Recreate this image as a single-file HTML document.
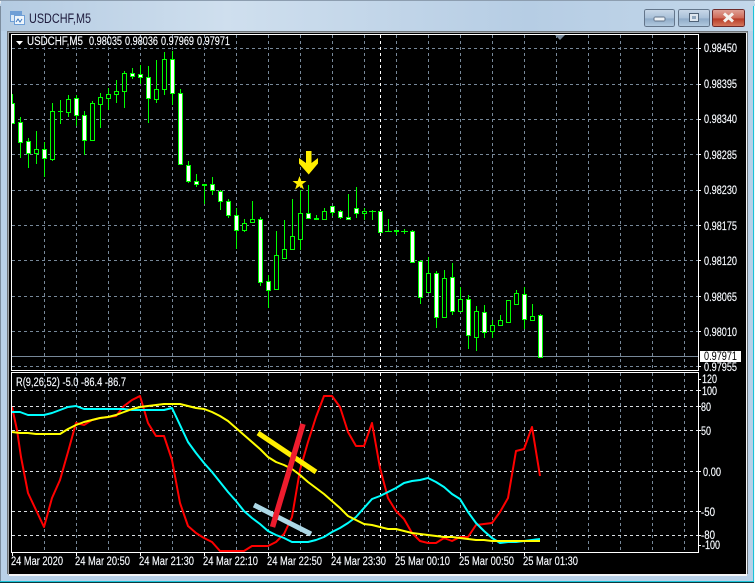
<!DOCTYPE html>
<html><head><meta charset="utf-8"><title>USDCHF,M5</title>
<style>
html,body{margin:0;padding:0;background:#000;width:755px;height:583px;overflow:hidden}
svg{display:block}
text{font-family:"Liberation Sans",sans-serif;font-size:11.5px;fill:#fff;stroke:#e8f2ff;stroke-width:.15px}
</style></head><body>
<svg width="755" height="583" viewBox="0 0 755 583" xmlns="http://www.w3.org/2000/svg" shape-rendering="crispEdges">
<defs>
<linearGradient id="tb" x1="0" y1="0" x2="1" y2="0"><stop offset="0" stop-color="#b4cbe2"/><stop offset=".3" stop-color="#cfdfee"/><stop offset=".7" stop-color="#b6cde4"/><stop offset="1" stop-color="#c3d7ea"/></linearGradient>
<linearGradient id="bt" x1="0" y1="0" x2="0" y2="1"><stop offset="0" stop-color="#c9d9e9"/><stop offset=".5" stop-color="#a9c0d8"/><stop offset=".55" stop-color="#8fabc8"/><stop offset="1" stop-color="#b3cbe0"/></linearGradient>
<linearGradient id="cl" x1="0" y1="0" x2="0" y2="1"><stop offset="0" stop-color="#e0a398"/><stop offset=".5" stop-color="#cf6a58"/><stop offset=".55" stop-color="#b83c28"/><stop offset="1" stop-color="#d67a60"/></linearGradient>
<clipPath id="m"><rect x="12" y="35" width="686" height="335"/></clipPath>
<clipPath id="s"><rect x="12" y="373" width="686" height="179"/></clipPath>
</defs>
<!-- window chrome -->
<rect width="755" height="583" fill="#eef1f4"/>
<path d="M0 583V6Q0 0 6 0H749Q755 0 755 6V583Z" fill="#b9d1e8"/>
<rect x="1" y="1" width="753" height="30" fill="url(#tb)"/>
<rect x="0" y="0" width="755" height="1" fill="#8d9eb0"/>
<rect x="7" y="31" width="741" height="543" fill="#6d7378"/>
<rect x="8" y="32" width="739" height="543" fill="#a3a7aa"/>
<rect x="9" y="33" width="738" height="543" fill="#f4f5f6"/>
<rect x="9" y="33" width="737" height="541" fill="#000"/>
<rect x="0" y="581" width="755" height="1" fill="#19c3d8"/>
<rect x="0" y="582" width="755" height="1" fill="#0b3a40"/>
<rect x="753" y="6" width="1" height="575" fill="#19c3d8"/>
<rect x="754" y="6" width="1" height="577" fill="#f2f5f7"/>
<rect x="0" y="6" width="1" height="575" fill="#7c8d9e"/>
<!-- title icon -->
<g>
<rect x="10.5" y="11.5" width="11" height="10" fill="#dce9f6" stroke="#6f9fd6"/>
<rect x="11" y="12" width="10" height="3" fill="#6f9fd6"/>
<rect x="14.5" y="15.5" width="10" height="9" fill="#eef5fb" stroke="#6f9fd6"/>
<path d="M16 22l2-3 2 3 2-3" fill="none" stroke="#3c78c0" shape-rendering="auto"/>
</g>
<text x="29" y="23" textLength="62" lengthAdjust="spacingAndGlyphs" style="font-size:13.5px;fill:#1d1a3c;stroke:none" shape-rendering="auto">USDCHF,M5</text>
<!-- buttons -->
<rect x="644.5" y="9.5" width="30" height="17" rx="2" fill="url(#bt)" stroke="#63758a"/>
<rect x="654" y="17" width="11" height="4" rx="1" fill="#eef2f6" stroke="#5f7188" stroke-width=".6"/>
<rect x="678.5" y="9.5" width="31" height="17" rx="2" fill="url(#bt)" stroke="#63758a"/>
<rect x="689.5" y="13.5" width="9" height="8" fill="#dfe7ef" stroke="#4f6277"/>
<rect x="692" y="16" width="4" height="3" fill="#8fa6bd"/>
<rect x="712.5" y="9.5" width="32" height="17" rx="2" fill="url(#cl)" stroke="#6e2a2a"/>
<path d="M724 13.5l9 8M733 13.5l-9 8" stroke="#f4f2ee" stroke-width="3" fill="none" shape-rendering="auto"/>
<!-- grids -->
<g stroke="#778899" stroke-width="1" stroke-dasharray="3 3" fill="none">
<path d="M12 48.5H698M12 84.5H698M12 119.5H698M12 154.5H698M12 190.5H698M12 225.5H698M12 260.5H698M12 296.5H698M12 331.5H698M12 366.5H698"/>
<path d="M44.5 35V370M76.5 35V370M108.5 35V370M140.5 35V370M172.5 35V370M204.5 35V370M236.5 35V370M268.5 35V370M300.5 35V370M332.5 35V370M364.5 35V370M396.5 35V370M428.5 35V370M460.5 35V370M492.5 35V370M524.5 35V370M556.5 35V370M588.5 35V370M620.5 35V370M652.5 35V370M684.5 35V370"/>
<path d="M44.5 373V552M76.5 373V552M108.5 373V552M140.5 373V552M172.5 373V552M204.5 373V552M236.5 373V552M268.5 373V552M300.5 373V552M332.5 373V552M364.5 373V552M396.5 373V552M428.5 373V552M460.5 373V552M492.5 373V552M524.5 373V552M556.5 373V552M588.5 373V552M620.5 373V552M652.5 373V552M684.5 373V552"/>
</g>
<path d="M12 390.5H698M12 406.5H698M12 430.5H698M12 471.5H698M12 511.5H698M12 535.5H698" stroke="#d8dde2" stroke-dasharray="3 3" fill="none"/>
<path d="M380.5 35V370M380.5 373V552" stroke="#fff" stroke-dasharray="3 3" fill="none"/>
<!-- price line -->
<rect x="12" y="356" width="686" height="1" fill="#778899"/>
<!-- candles -->
<g clip-path="url(#m)" stroke="#00ff00" stroke-width="1">
<path fill="none" d="M12.5 94V124M20.5 117V158M28.5 138V168M36.5 131V164M44.5 142V177M52.5 103V161M60.5 100V124M68.5 95V117M76.5 95V126M84.5 111V155M92.5 101V141M100.5 93V128M108.5 88V110M116.5 80V103M124.5 71V108M132.5 68V79M140.5 65V84M148.5 66V123M156.5 60V103M164.5 52V95M172.5 51V105M180.5 89V165M188.5 161V183M196.5 174V187M204.5 184V204M212.5 177V195M220.5 190V210M228.5 199V218M236.5 208V249M244.5 219V232M252.5 201V223M260.5 217V286M268.5 275V308M276.5 231V290M284.5 220V259M292.5 199V250M300.5 190V250M308.5 185V219M316.5 215V220M324.5 208V220M332.5 206V216M340.5 210V219M348.5 194V220M356.5 187V218M364.5 208V220M372.5 210V220M380.5 211V232M388.5 219V232M396.5 230V235M404.5 229V234M412.5 230V263M420.5 260V304M428.5 257V292M436.5 271V328M444.5 270V318M452.5 263V315M460.5 287V312M468.5 295V349M476.5 306V351M484.5 305V338M492.5 320V338M500.5 315V326M508.5 300V323M516.5 290V304M524.5 287V329M532.5 304V320M540.5 314V358"/>
<path fill="none" d="M58 111.5h5M369 211.5h7M385 231.5h7M401 231.5h7"/>
<path fill="#000" d="M34.5 149.5h4v4h-4zM50.5 111.5h4v48h-4zM66.5 99.5h4v13h-4zM90.5 103.5h4v37h-4zM98.5 97.5h4v7h-4zM106.5 94.5h4v4h-4zM114.5 91.5h4v3h-4zM122.5 73.5h4v18h-4zM154.5 89.5h4v10h-4zM162.5 59.5h4v30h-4zM242.5 223.5h4v7h-4zM250.5 219.5h4v3h-4zM274.5 255.5h4v34h-4zM282.5 249.5h4v9h-4zM290.5 236.5h4v13h-4zM298.5 213.5h4v26h-4zM322.5 211.5h4v8h-4zM362.5 211.5h4v2h-4zM426.5 273.5h4v19h-4zM442.5 278.5h4v39h-4zM458.5 299.5h4v12h-4zM474.5 311.5h4v26h-4zM490.5 325.5h4v6h-4zM498.5 320.5h4v5h-4zM506.5 300.5h4v22h-4zM514.5 293.5h4v11h-4zM530.5 316.5h4v4h-4z"/>
<path fill="#fff" d="M10.5 103.5h4v20h-4zM18.5 122.5h4v20h-4zM26.5 141.5h4v12h-4zM42.5 149.5h4v9h-4zM74.5 98.5h4v17h-4zM82.5 115.5h4v25h-4zM130.5 73.5h4v3h-4zM138.5 74.5h4v3h-4zM146.5 77.5h4v21h-4zM170.5 59.5h4v34h-4zM178.5 93.5h4v71h-4zM186.5 165.5h4v16h-4zM194.5 181.5h4v3h-4zM202.5 184.5h4v1h-4zM210.5 184.5h4v6h-4zM218.5 191.5h4v10h-4zM226.5 201.5h4v14h-4zM234.5 215.5h4v15h-4zM258.5 219.5h4v63h-4zM266.5 281.5h4v9h-4zM306.5 213.5h4v5h-4zM314.5 218.5h4v1h-4zM330.5 206.5h4v6h-4zM338.5 211.5h4v6h-4zM346.5 217.5h4v2h-4zM354.5 208.5h4v5h-4zM378.5 211.5h4v21h-4zM394.5 230.5h4v1h-4zM410.5 231.5h4v31h-4zM418.5 261.5h4v36h-4zM434.5 273.5h4v44h-4zM450.5 277.5h4v34h-4zM466.5 299.5h4v36h-4zM482.5 312.5h4v20h-4zM522.5 294.5h4v25h-4zM538.5 315.5h4v42h-4z"/>
</g>
<!-- arrow + star -->
<path d="M306 151H311.500V163L318 158V163.500L308.700 174.500L299 163.500V158L306 163Z" fill="#ffee00" shape-rendering="auto"/>
<path d="M299.500 176L301.300 181H306.500L302.300 184.200L303.900 189.500L299.500 186.300L295.100 189.500L296.700 184.200L292.500 181H297.700Z" fill="#ffee00" shape-rendering="auto"/>
<!-- frames -->
<path d="M11.500 34.500H698.500V370.500H11.500ZM11.500 372.500H698.500V552.500H11.500Z" fill="none" stroke="#fff"/>
<path d="M555 35H565L560 40Z" fill="#778899" shape-rendering="auto"/>
<path d="M16 41H23L19.500 45Z" fill="#fff" shape-rendering="auto"/>
<!-- indicator -->
<g clip-path="url(#s)" fill="none" stroke-width="2" shape-rendering="auto" stroke-linejoin="round">
<polyline stroke="#ff0000" points="12,407 17,430 21,457 28,493 36,510 44,527 52,498 60,480 68,452 76,423 84,425 92,420 100,418 108,417 116,416 124,406 132,400 140,396 148,423 156,436 164,436 172,460 180,503 188,526 196,533 204,538 212,542 220,551 228,551 236,551 244,551 252,546 260,546 268,546 276,542 284,534 292,517 300,470 308,442 316,417 324,396 332,396 340,407 348,432 356,446 364,446 372,423 380,468 388,498 396,511 404,519 412,533 420,541 428,543 436,543 444,538 452,541 460,537 468,537 476,525 484,524 492,523 500,512 508,498 516,451 524,449 532,427 540,476"/>
<polyline stroke="#00ffff" points="12,412 20,412 28,415 36,415 44,415 52,413 60,410 68,407 76,406 84,409 92,409 100,409 108,409 116,409 124,409 132,410 140,410 148,410 156,410 164,410 172,408 180,425 188,442 196,453 204,463 212,472 220,482 228,492 236,501 244,511 252,518 260,524 268,531 276,535 284,538 292,542 300,542 308,542 316,540 324,537 332,532 340,528 348,523 356,517 364,508 372,499 380,496 388,492 396,488 404,483 412,481 420,480 428,478 436,482 444,487 452,494 460,499 468,512 476,523 484,531 492,538 500,543 508,542 516,542 524,541 532,540 540,539"/>
<polyline stroke="#ffff00" points="12,432 20,433 28,433 36,434 44,434 52,434 60,434 68,429 76,425 84,422 92,420 100,418 108,417 116,415 124,412 132,409 140,407 148,406 156,405 164,404 172,404 180,404 188,406 196,408 204,409 212,412 220,416 228,421 236,428 244,435 252,442 260,449 268,457 276,462 284,465 292,469 300,475 308,482 316,488 324,494 332,501 340,508 348,516 356,520 364,524 372,525 380,527 388,529 396,529 404,531 412,533 420,534 428,535 436,536 444,537 452,537 460,538 468,539 476,540 484,540 492,541 500,541 508,541 516,541 524,541 532,541 540,541"/>
<path d="M258 433L316 472" stroke="#ffee00" stroke-width="5"/>
<path d="M254 505L311 534" stroke="#add8e6" stroke-width="5"/>
<path d="M272.500 527L303 424" stroke="#ee1c2e" stroke-width="5.500"/>
</g>
<!-- header texts -->
<g shape-rendering="auto">
<text x="27" y="45" textLength="56" lengthAdjust="spacingAndGlyphs">USDCHF,M5</text>
<text x="89" y="45" textLength="33" lengthAdjust="spacingAndGlyphs">0.98035</text>
<text x="125" y="45" textLength="33" lengthAdjust="spacingAndGlyphs">0.98036</text>
<text x="161" y="45" textLength="33" lengthAdjust="spacingAndGlyphs">0.97969</text>
<text x="197" y="45" textLength="33" lengthAdjust="spacingAndGlyphs">0.97971</text>
<text x="16" y="386" textLength="110" lengthAdjust="spacingAndGlyphs">R(9,26,52) -5.0 -86.4 -86.7</text>
<!-- price axis -->
<g>
<text x="704" y="52" textLength="33" lengthAdjust="spacingAndGlyphs">0.98450</text>
<text x="704" y="88" textLength="33" lengthAdjust="spacingAndGlyphs">0.98395</text>
<text x="704" y="123" textLength="33" lengthAdjust="spacingAndGlyphs">0.98340</text>
<text x="704" y="159" textLength="33" lengthAdjust="spacingAndGlyphs">0.98285</text>
<text x="704" y="194" textLength="33" lengthAdjust="spacingAndGlyphs">0.98230</text>
<text x="704" y="230" textLength="33" lengthAdjust="spacingAndGlyphs">0.98175</text>
<text x="704" y="265" textLength="33" lengthAdjust="spacingAndGlyphs">0.98120</text>
<text x="704" y="301" textLength="33" lengthAdjust="spacingAndGlyphs">0.98065</text>
<text x="704" y="336" textLength="33" lengthAdjust="spacingAndGlyphs">0.98010</text>
<text x="704" y="371" textLength="33" lengthAdjust="spacingAndGlyphs">0.97955</text>
</g>
</g>
<rect x="700" y="351" width="41" height="11" fill="#fff"/>
<text x="704" y="360" textLength="33" lengthAdjust="spacingAndGlyphs" style="fill:#000;stroke:none" shape-rendering="auto">0.97971</text>
<path d="M698 48.500h3M698 84.500h3M698 119.500h3M698 154.500h3M698 190.500h3M698 225.500h3M698 260.500h3M698 296.500h3M698 331.500h3M698 366.500h3M698 390.500h3M698 406.500h3M698 430.500h3M698 471.500h3M698 511.500h3M698 535.500h3M698 379.500h3M698 545.500h3" stroke="#fff"/>
<g shape-rendering="auto">
<text x="702" y="383" textLength="15" lengthAdjust="spacingAndGlyphs">120</text>
<text x="702" y="395" textLength="15" lengthAdjust="spacingAndGlyphs">100</text>
<text x="701" y="411" textLength="10" lengthAdjust="spacingAndGlyphs">80</text>
<text x="701" y="435" textLength="10" lengthAdjust="spacingAndGlyphs">50</text>
<text x="703" y="476" textLength="18" lengthAdjust="spacingAndGlyphs">0.00</text>
<text x="701" y="516" textLength="14" lengthAdjust="spacingAndGlyphs">-50</text>
<text x="701" y="539" textLength="14" lengthAdjust="spacingAndGlyphs">-80</text>
<text x="702" y="549" textLength="18" lengthAdjust="spacingAndGlyphs">-100</text>
<!-- time axis -->
<text x="11" y="565" textLength="52" lengthAdjust="spacingAndGlyphs">24 Mar 2020</text>
<text x="75" y="565" textLength="55" lengthAdjust="spacingAndGlyphs">24 Mar 20:50</text>
<text x="139" y="565" textLength="55" lengthAdjust="spacingAndGlyphs">24 Mar 21:30</text>
<text x="203" y="565" textLength="55" lengthAdjust="spacingAndGlyphs">24 Mar 22:10</text>
<text x="267" y="565" textLength="55" lengthAdjust="spacingAndGlyphs">24 Mar 22:50</text>
<text x="331" y="565" textLength="55" lengthAdjust="spacingAndGlyphs">24 Mar 23:30</text>
<text x="395" y="565" textLength="55" lengthAdjust="spacingAndGlyphs">25 Mar 00:10</text>
<text x="459" y="565" textLength="55" lengthAdjust="spacingAndGlyphs">25 Mar 00:50</text>
<text x="523" y="565" textLength="55" lengthAdjust="spacingAndGlyphs">25 Mar 01:30</text>
</g>
<path d="M12.500 552v4M76.500 552v4M140.500 552v4M204.500 552v4M268.500 552v4M332.500 552v4M396.500 552v4M460.500 552v4M524.500 552v4" stroke="#fff"/>
</svg>
</body></html>
